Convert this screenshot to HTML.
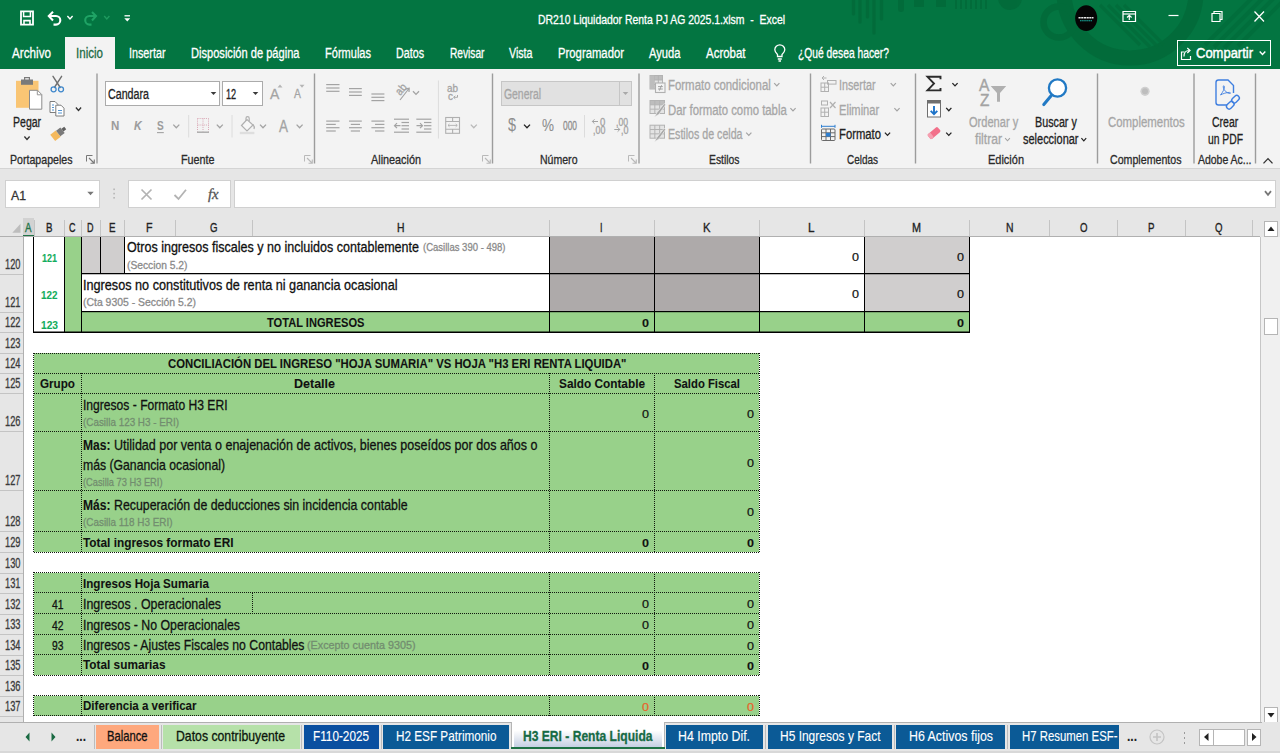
<!DOCTYPE html>
<html lang="es"><head><meta charset="utf-8"><title>DR210 Liquidador Renta PJ AG 2025.1.xlsm - Excel</title>
<style>
html,body{margin:0;padding:0;}
body{width:1280px;height:753px;overflow:hidden;position:relative;background:#fff;font-family:"Liberation Sans",sans-serif;}
#app{position:absolute;left:0;top:0;width:1280px;height:753px;overflow:hidden;}
#app div{position:absolute;box-sizing:border-box;}
#app svg{position:absolute;overflow:visible;}
.t{position:absolute;white-space:nowrap;transform-origin:0 50%;display:block;}
</style></head><body><div id="app">
<div style="left:0px;top:0px;width:1280px;height:69px;background:#037541;"></div>
<svg style="left:820px;top:0;overflow:hidden" width="460" height="69" viewBox="820 0 460 69">
<g fill="none" stroke="#026636" opacity="0.62">
<circle cx="1130" cy="-8" r="66" stroke-width="15"/>
<circle cx="1059" cy="22" r="15.5" stroke-width="6.5"/>
<path d="M1100 5 L1140 45 M1108 5 L1150 47 M1116 5 L1158 47 M1124 5 L1164 45" stroke-width="3.2" opacity="0.8"/>
<path d="M1205 45 L1255 -5 M1214 47 L1266 -5 M1224 48 L1277 -5 M1238 46 L1290 -6" stroke-width="4" opacity="0.7"/>
</g>
<g stroke="#026636" opacity="0.6" stroke-linecap="round">
<path d="M853.5 0V14 M860 0V22 M867.5 0V17 M874 0V33 M881.5 0V19" stroke-width="3.2"/>
<path d="M901 0V9" stroke-width="6"/><path d="M919 0V7 M941 0V7" stroke-width="10" stroke-linecap="butt"/>
<path d="M956 0V9 M961 0V9 M966 0V9 M971 0V9 M976 0V9 M981 0V9 M986 0V9" stroke-width="2" stroke-linecap="butt"/>
<circle cx="1010" cy="-2" r="12" fill="#026636" stroke="none"/>
</g></svg>
<div style="left:65px;top:37px;width:50px;height:32px;background:#f3f3f3;"></div>
<span class="t" style="left:12.00px;top:45.50px;font-size:14px;line-height:14px;color:#fff;transform:scaleX(0.8354);-webkit-text-stroke:0.3px #fff;">Archivo</span>
<span class="t" style="left:76.00px;top:45.50px;font-size:14px;line-height:14px;color:#1e6b45;transform:scaleX(0.8261);-webkit-text-stroke:0.3px #1e6b45;">Inicio</span>
<span class="t" style="left:128.50px;top:45.50px;font-size:14px;line-height:14px;color:#fff;transform:scaleX(0.7690);-webkit-text-stroke:0.3px #fff;">Insertar</span>
<span class="t" style="left:190.50px;top:45.50px;font-size:14px;line-height:14px;color:#fff;transform:scaleX(0.7921);-webkit-text-stroke:0.3px #fff;">Disposición de página</span>
<span class="t" style="left:324.50px;top:45.50px;font-size:14px;line-height:14px;color:#fff;transform:scaleX(0.7884);-webkit-text-stroke:0.3px #fff;">Fórmulas</span>
<span class="t" style="left:396.00px;top:45.50px;font-size:14px;line-height:14px;color:#fff;transform:scaleX(0.7656);-webkit-text-stroke:0.3px #fff;">Datos</span>
<span class="t" style="left:449.50px;top:45.50px;font-size:14px;line-height:14px;color:#fff;transform:scaleX(0.7270);-webkit-text-stroke:0.3px #fff;">Revisar</span>
<span class="t" style="left:509.00px;top:45.50px;font-size:14px;line-height:14px;color:#fff;transform:scaleX(0.7612);-webkit-text-stroke:0.3px #fff;">Vista</span>
<span class="t" style="left:558.00px;top:45.50px;font-size:14px;line-height:14px;color:#fff;transform:scaleX(0.8078);-webkit-text-stroke:0.3px #fff;">Programador</span>
<span class="t" style="left:649.00px;top:45.50px;font-size:14px;line-height:14px;color:#fff;transform:scaleX(0.7986);-webkit-text-stroke:0.3px #fff;">Ayuda</span>
<span class="t" style="left:706.00px;top:45.50px;font-size:14px;line-height:14px;color:#fff;transform:scaleX(0.8187);-webkit-text-stroke:0.3px #fff;">Acrobat</span>
<span class="t" style="left:798.00px;top:45.50px;font-size:14px;line-height:14px;color:#fff;transform:scaleX(0.7354);-webkit-text-stroke:0.3px #fff;">¿Qué desea hacer?</span>
<span class="t" style="left:537.50px;top:12.70px;font-size:13px;line-height:13px;color:#fff;transform:scaleX(0.8024);-webkit-text-stroke:0.3px #fff;white-space:pre;">DR210 Liquidador Renta PJ AG 2025.1.xlsm  -  Excel</span>
<div style="left:1177px;top:40px;width:93.5px;height:26px;border:1.5px solid #fff;"></div>
<span class="t" style="left:1196.00px;top:45.25px;font-size:15.5px;line-height:15.5px;color:#fff;transform:scaleX(0.8377);-webkit-text-stroke:0.5px #fff;">Compartir</span>
<div style="left:0px;top:69px;width:1280px;height:99px;background:#f3f3f3;"></div>
<div style="left:0px;top:168px;width:1280px;height:1px;background:#d4d4d4;"></div>
<div style="left:0px;top:169px;width:1280px;height:49px;background:#e6e6e6;"></div>
<svg style="left:0;top:0" width="1280" height="170" viewBox="0 0 1280 170"><path d="M97 73.6V163.6M314.5 73.6V163.6M492.5 73.6V163.6M639 73.6V163.6M810.5 73.6V163.6M915.5 73.6V163.6M1097.5 73.6V163.6M1194 73.6V163.6M1255.5 73.6V163.6" stroke="#9c9c9c" stroke-width="1.4" fill="none"/></svg>
<span class="t" style="left:9.50px;top:153.00px;font-size:13px;line-height:13px;color:#2b2b2b;transform:scaleX(0.8158);-webkit-text-stroke:0.3px #2b2b2b;">Portapapeles</span>
<span class="t" style="left:181.00px;top:153.00px;font-size:13px;line-height:13px;color:#2b2b2b;transform:scaleX(0.8277);-webkit-text-stroke:0.3px #2b2b2b;">Fuente</span>
<span class="t" style="left:370.50px;top:153.00px;font-size:13px;line-height:13px;color:#2b2b2b;transform:scaleX(0.8335);-webkit-text-stroke:0.3px #2b2b2b;">Alineación</span>
<span class="t" style="left:539.50px;top:153.00px;font-size:13px;line-height:13px;color:#2b2b2b;transform:scaleX(0.8110);-webkit-text-stroke:0.3px #2b2b2b;">Número</span>
<span class="t" style="left:709.00px;top:153.00px;font-size:13px;line-height:13px;color:#2b2b2b;transform:scaleX(0.7966);-webkit-text-stroke:0.3px #2b2b2b;">Estilos</span>
<span class="t" style="left:847.00px;top:153.00px;font-size:13px;line-height:13px;color:#2b2b2b;transform:scaleX(0.7660);-webkit-text-stroke:0.3px #2b2b2b;">Celdas</span>
<span class="t" style="left:988.00px;top:153.00px;font-size:13px;line-height:13px;color:#2b2b2b;transform:scaleX(0.8443);-webkit-text-stroke:0.3px #2b2b2b;">Edición</span>
<span class="t" style="left:1109.50px;top:153.00px;font-size:13px;line-height:13px;color:#2b2b2b;transform:scaleX(0.8178);-webkit-text-stroke:0.3px #2b2b2b;">Complementos</span>
<span class="t" style="left:1197.50px;top:153.00px;font-size:13px;line-height:13px;color:#2b2b2b;transform:scaleX(0.8046);-webkit-text-stroke:0.3px #2b2b2b;">Adobe Ac...</span>
<div style="left:105px;top:81px;width:115px;height:25px;background:#fff;border:1px solid #ababab;"></div>
<div style="left:222px;top:81px;width:41px;height:25px;background:#fff;border:1px solid #ababab;"></div>
<div style="left:501px;top:81px;width:131px;height:25px;background:#e1e1e1;border:1px solid #c6c6c6;"></div>
<div style="left:619px;top:81px;width:1px;height:25px;background:#c6c6c6;"></div>
<div style="left:5px;top:180px;width:95px;height:28px;background:#fff;border:1px solid #d0d0d0;"></div>
<div style="left:128px;top:180px;width:103px;height:28px;background:#fff;border:1px solid #d0d0d0;"></div>
<div style="left:234px;top:180px;width:1042px;height:28px;background:#fff;border:1px solid #d0d0d0;"></div>
<span class="t" style="left:11.00px;top:188.50px;font-size:13px;line-height:13px;color:#333;transform:scaleX(0.9433);-webkit-text-stroke:0.3px #333;">A1</span>
<div style="left:0px;top:218px;width:1260px;height:505px;background:#fff;"></div>
<div style="left:0px;top:218px;width:1260px;height:18.5px;background:#e6e6e6;"></div>
<div style="left:0px;top:237px;width:23px;height:486px;background:#e6e6e6;"></div>
<div style="left:1260px;top:218px;width:20px;height:19px;background:#e6e6e6;"></div>
<div style="left:1260px;top:237px;width:20px;height:486px;background:#f0f0f0;"></div>
<div style="left:1260px;top:237px;width:1px;height:486px;background:#c6c6c6;"></div>
<div style="left:23px;top:218px;width:11px;height:19px;background:#d2d2d2;border-bottom:2px solid #217346;"></div>
<span class="t" style="left:25.25px;top:220.75px;font-size:13.5px;line-height:13.5px;color:#217346;transform:scaleX(0.7218);-webkit-text-stroke:0.35px #217346;">A</span>
<div style="left:33.5px;top:220px;width:1px;height:16px;background:#c4c4c4;"></div>
<span class="t" style="left:45.75px;top:220.75px;font-size:13.5px;line-height:13.5px;color:#222;transform:scaleX(0.7218);-webkit-text-stroke:0.35px #222;">B</span>
<div style="left:63.5px;top:220px;width:1px;height:16px;background:#c4c4c4;"></div>
<span class="t" style="left:69.25px;top:220.75px;font-size:13.5px;line-height:13.5px;color:#222;transform:scaleX(0.6667);-webkit-text-stroke:0.35px #222;">C</span>
<div style="left:80.5px;top:220px;width:1px;height:16px;background:#c4c4c4;"></div>
<span class="t" style="left:87.25px;top:220.75px;font-size:13.5px;line-height:13.5px;color:#222;transform:scaleX(0.6667);-webkit-text-stroke:0.35px #222;">D</span>
<div style="left:99.5px;top:220px;width:1px;height:16px;background:#c4c4c4;"></div>
<span class="t" style="left:108.75px;top:220.75px;font-size:13.5px;line-height:13.5px;color:#222;transform:scaleX(0.7218);-webkit-text-stroke:0.35px #222;">E</span>
<div style="left:123.5px;top:220px;width:1px;height:16px;background:#c4c4c4;"></div>
<span class="t" style="left:146.25px;top:220.75px;font-size:13.5px;line-height:13.5px;color:#222;transform:scaleX(0.7882);-webkit-text-stroke:0.35px #222;">F</span>
<div style="left:174.5px;top:220px;width:1px;height:16px;background:#c4c4c4;"></div>
<span class="t" style="left:209.75px;top:220.75px;font-size:13.5px;line-height:13.5px;color:#222;transform:scaleX(0.7143);-webkit-text-stroke:0.35px #222;">G</span>
<div style="left:251.5px;top:220px;width:1px;height:16px;background:#c4c4c4;"></div>
<span class="t" style="left:396.75px;top:220.75px;font-size:13.5px;line-height:13.5px;color:#222;transform:scaleX(0.7693);-webkit-text-stroke:0.35px #222;">H</span>
<div style="left:548.5px;top:220px;width:1px;height:16px;background:#c4c4c4;"></div>
<span class="t" style="left:600.25px;top:220.75px;font-size:13.5px;line-height:13.5px;color:#222;transform:scaleX(0.6666);-webkit-text-stroke:0.35px #222;">I</span>
<div style="left:653.5px;top:220px;width:1px;height:16px;background:#c4c4c4;"></div>
<span class="t" style="left:702.75px;top:220.75px;font-size:13.5px;line-height:13.5px;color:#222;transform:scaleX(0.8329);-webkit-text-stroke:0.35px #222;">K</span>
<div style="left:758.5px;top:220px;width:1px;height:16px;background:#c4c4c4;"></div>
<span class="t" style="left:808.25px;top:220.75px;font-size:13.5px;line-height:13.5px;color:#222;transform:scaleX(0.8657);-webkit-text-stroke:0.35px #222;">L</span>
<div style="left:863.5px;top:220px;width:1px;height:16px;background:#c4c4c4;"></div>
<span class="t" style="left:912.00px;top:220.75px;font-size:13.5px;line-height:13.5px;color:#222;transform:scaleX(0.8003);-webkit-text-stroke:0.35px #222;">M</span>
<div style="left:968.5px;top:220px;width:1px;height:16px;background:#c4c4c4;"></div>
<span class="t" style="left:1005.50px;top:220.75px;font-size:13.5px;line-height:13.5px;color:#222;transform:scaleX(0.7693);-webkit-text-stroke:0.35px #222;">N</span>
<div style="left:1049.0px;top:220px;width:1px;height:16px;background:#c4c4c4;"></div>
<span class="t" style="left:1079.75px;top:220.75px;font-size:13.5px;line-height:13.5px;color:#222;transform:scaleX(0.7143);-webkit-text-stroke:0.35px #222;">O</span>
<div style="left:1117.0px;top:220px;width:1px;height:16px;background:#c4c4c4;"></div>
<span class="t" style="left:1148.00px;top:220.75px;font-size:13.5px;line-height:13.5px;color:#222;transform:scaleX(0.7218);-webkit-text-stroke:0.35px #222;">P</span>
<div style="left:1184.5px;top:220px;width:1px;height:16px;background:#c4c4c4;"></div>
<span class="t" style="left:1215.00px;top:220.75px;font-size:13.5px;line-height:13.5px;color:#222;transform:scaleX(0.7143);-webkit-text-stroke:0.35px #222;">Q</span>
<div style="left:1252.0px;top:220px;width:1px;height:16px;background:#c4c4c4;"></div>
<div style="left:0px;top:236px;width:1260px;height:1px;background:#b0b0b0;"></div>
<span class="t" style="left:4.50px;top:257.25px;font-size:14.5px;line-height:14.5px;color:#3a3a3a;transform:scaleX(0.6407);-webkit-text-stroke:0.3px #3a3a3a;">120</span>
<div style="left:0px;top:273.5px;width:23px;height:1px;background:#c4c4c4;"></div>
<span class="t" style="left:4.50px;top:295.25px;font-size:14.5px;line-height:14.5px;color:#3a3a3a;transform:scaleX(0.6407);-webkit-text-stroke:0.3px #3a3a3a;">121</span>
<div style="left:0px;top:311.5px;width:23px;height:1px;background:#c4c4c4;"></div>
<span class="t" style="left:4.50px;top:315.25px;font-size:14.5px;line-height:14.5px;color:#3a3a3a;transform:scaleX(0.6407);-webkit-text-stroke:0.3px #3a3a3a;">122</span>
<div style="left:0px;top:331.5px;width:23px;height:1px;background:#c4c4c4;"></div>
<span class="t" style="left:4.50px;top:336.25px;font-size:14.5px;line-height:14.5px;color:#3a3a3a;transform:scaleX(0.6407);-webkit-text-stroke:0.3px #3a3a3a;">123</span>
<div style="left:0px;top:352.5px;width:23px;height:1px;background:#c4c4c4;"></div>
<span class="t" style="left:4.50px;top:356.25px;font-size:14.5px;line-height:14.5px;color:#3a3a3a;transform:scaleX(0.6407);-webkit-text-stroke:0.3px #3a3a3a;">124</span>
<div style="left:0px;top:372.5px;width:23px;height:1px;background:#c4c4c4;"></div>
<span class="t" style="left:4.50px;top:376.25px;font-size:14.5px;line-height:14.5px;color:#3a3a3a;transform:scaleX(0.6407);-webkit-text-stroke:0.3px #3a3a3a;">125</span>
<div style="left:0px;top:392.5px;width:23px;height:1px;background:#c4c4c4;"></div>
<span class="t" style="left:4.50px;top:414.25px;font-size:14.5px;line-height:14.5px;color:#3a3a3a;transform:scaleX(0.6407);-webkit-text-stroke:0.3px #3a3a3a;">126</span>
<div style="left:0px;top:430.5px;width:23px;height:1px;background:#c4c4c4;"></div>
<span class="t" style="left:4.50px;top:473.25px;font-size:14.5px;line-height:14.5px;color:#3a3a3a;transform:scaleX(0.6407);-webkit-text-stroke:0.3px #3a3a3a;">127</span>
<div style="left:0px;top:489.5px;width:23px;height:1px;background:#c4c4c4;"></div>
<span class="t" style="left:4.50px;top:514.25px;font-size:14.5px;line-height:14.5px;color:#3a3a3a;transform:scaleX(0.6407);-webkit-text-stroke:0.3px #3a3a3a;">128</span>
<div style="left:0px;top:530.5px;width:23px;height:1px;background:#c4c4c4;"></div>
<span class="t" style="left:4.50px;top:535.25px;font-size:14.5px;line-height:14.5px;color:#3a3a3a;transform:scaleX(0.6407);-webkit-text-stroke:0.3px #3a3a3a;">129</span>
<div style="left:0px;top:551.5px;width:23px;height:1px;background:#c4c4c4;"></div>
<span class="t" style="left:4.50px;top:556.25px;font-size:14.5px;line-height:14.5px;color:#3a3a3a;transform:scaleX(0.6407);-webkit-text-stroke:0.3px #3a3a3a;">130</span>
<div style="left:0px;top:572.5px;width:23px;height:1px;background:#c4c4c4;"></div>
<span class="t" style="left:4.50px;top:576.25px;font-size:14.5px;line-height:14.5px;color:#3a3a3a;transform:scaleX(0.6407);-webkit-text-stroke:0.3px #3a3a3a;">131</span>
<div style="left:0px;top:592.5px;width:23px;height:1px;background:#c4c4c4;"></div>
<span class="t" style="left:4.50px;top:597.25px;font-size:14.5px;line-height:14.5px;color:#3a3a3a;transform:scaleX(0.6407);-webkit-text-stroke:0.3px #3a3a3a;">132</span>
<div style="left:0px;top:613.5px;width:23px;height:1px;background:#c4c4c4;"></div>
<span class="t" style="left:4.50px;top:617.25px;font-size:14.5px;line-height:14.5px;color:#3a3a3a;transform:scaleX(0.6407);-webkit-text-stroke:0.3px #3a3a3a;">133</span>
<div style="left:0px;top:633.5px;width:23px;height:1px;background:#c4c4c4;"></div>
<span class="t" style="left:4.50px;top:638.25px;font-size:14.5px;line-height:14.5px;color:#3a3a3a;transform:scaleX(0.6407);-webkit-text-stroke:0.3px #3a3a3a;">134</span>
<div style="left:0px;top:654.5px;width:23px;height:1px;background:#c4c4c4;"></div>
<span class="t" style="left:4.50px;top:658.25px;font-size:14.5px;line-height:14.5px;color:#3a3a3a;transform:scaleX(0.6407);-webkit-text-stroke:0.3px #3a3a3a;">135</span>
<div style="left:0px;top:674.5px;width:23px;height:1px;background:#c4c4c4;"></div>
<span class="t" style="left:4.50px;top:679.25px;font-size:14.5px;line-height:14.5px;color:#3a3a3a;transform:scaleX(0.6407);-webkit-text-stroke:0.3px #3a3a3a;">136</span>
<div style="left:0px;top:695.5px;width:23px;height:1px;background:#c4c4c4;"></div>
<span class="t" style="left:4.50px;top:699.25px;font-size:14.5px;line-height:14.5px;color:#3a3a3a;transform:scaleX(0.6407);-webkit-text-stroke:0.3px #3a3a3a;">137</span>
<div style="left:0px;top:715.5px;width:23px;height:1px;background:#c4c4c4;"></div>
<div style="left:22.5px;top:237px;width:1px;height:486px;background:#b0b0b0;"></div>
<div style="left:64px;top:237px;width:17px;height:95px;background:#98d18a;"></div>
<div style="left:81px;top:237px;width:19px;height:37px;background:#d0cece;"></div>
<div style="left:100px;top:237px;width:24px;height:37px;background:#d0cece;"></div>
<div style="left:549px;top:237px;width:210px;height:75px;background:#aeaaaa;"></div>
<div style="left:864px;top:237px;width:105px;height:75px;background:#d0cece;"></div>
<div style="left:81px;top:312px;width:888px;height:20px;background:#98d18a;"></div>
<div style="left:81px;top:273px;width:888px;height:1px;background:#000;"></div>
<div style="left:81px;top:274px;width:888px;height:1px;background:rgba(0,0,0,0.25);"></div>
<div style="left:81px;top:311px;width:888px;height:1px;background:#000;"></div>
<div style="left:81px;top:312px;width:888px;height:1px;background:rgba(0,0,0,0.2);"></div>
<div style="left:33px;top:331px;width:937px;height:1px;background:rgba(0,0,0,0.5);"></div>
<div style="left:33px;top:332px;width:937px;height:1px;background:#000;"></div>
<div style="left:33px;top:237px;width:1.3px;height:95px;background:#000;"></div>
<div style="left:64px;top:237px;width:1.3px;height:95px;background:#000;"></div>
<div style="left:81px;top:237px;width:1.3px;height:95px;background:#000;"></div>
<div style="left:549px;top:237px;width:1.3px;height:95px;background:#000;"></div>
<div style="left:654px;top:237px;width:1.3px;height:95px;background:#000;"></div>
<div style="left:759px;top:237px;width:1.3px;height:95px;background:#000;"></div>
<div style="left:864px;top:237px;width:1.3px;height:95px;background:#000;"></div>
<div style="left:968.6px;top:237px;width:1.3px;height:95px;background:#000;"></div>
<div style="left:100px;top:237px;width:1.3px;height:37px;background:#000;"></div>
<div style="left:124px;top:237px;width:1.3px;height:37px;background:#000;"></div>
<span class="t" style="left:41.50px;top:252.75px;font-size:10.5px;line-height:10.5px;color:#13ad5c;transform:scaleX(0.8562);-webkit-text-stroke:0.08px #13ad5c;font-weight:bold;">121</span>
<span class="t" style="left:40.75px;top:290.25px;font-size:10.5px;line-height:10.5px;color:#13ad5c;transform:scaleX(0.9418);-webkit-text-stroke:0.08px #13ad5c;font-weight:bold;">122</span>
<span class="t" style="left:41.00px;top:319.75px;font-size:10.5px;line-height:10.5px;color:#13ad5c;transform:scaleX(0.9704);-webkit-text-stroke:0.08px #13ad5c;font-weight:bold;">123</span>
<span class="t" style="left:127.00px;top:240.25px;font-size:14.5px;line-height:14.5px;color:#111;transform:scaleX(0.8647);-webkit-text-stroke:0.3px #111;">Otros ingresos fiscales y no incluidos contablemente</span>
<span class="t" style="left:422.50px;top:242.25px;font-size:11.5px;line-height:11.5px;color:#8a8a8a;transform:scaleX(0.8274);-webkit-text-stroke:0.3px #8a8a8a;">(Casillas 390 - 498)</span>
<span class="t" style="left:127.00px;top:259.75px;font-size:11.5px;line-height:11.5px;color:#8a8a8a;transform:scaleX(0.8929);-webkit-text-stroke:0.3px #8a8a8a;">(Seccion 5.2)</span>
<span class="t" style="left:83.00px;top:278.25px;font-size:14.5px;line-height:14.5px;color:#111;transform:scaleX(0.8728);-webkit-text-stroke:0.3px #111;">Ingresos no constitutivos de renta ni ganancia ocasional</span>
<span class="t" style="left:83.00px;top:297.25px;font-size:11.5px;line-height:11.5px;color:#8a8a8a;transform:scaleX(0.9065);-webkit-text-stroke:0.3px #8a8a8a;">(Cta 9305 - Sección 5.2)</span>
<span class="t" style="left:266.50px;top:315.75px;font-size:13.5px;line-height:13.5px;color:#111;transform:scaleX(0.8227);-webkit-text-stroke:0.08px #111;font-weight:bold;">TOTAL INGRESOS</span>
<span class="t" style="left:851.50px;top:251.75px;font-size:10.5px;line-height:10.5px;color:#111;transform:scaleX(1.1987);-webkit-text-stroke:0.2px #111;">0</span>
<span class="t" style="left:956.50px;top:251.75px;font-size:10.5px;line-height:10.5px;color:#111;transform:scaleX(1.1987);-webkit-text-stroke:0.2px #111;">0</span>
<span class="t" style="left:851.50px;top:289.25px;font-size:10.5px;line-height:10.5px;color:#111;transform:scaleX(1.1987);-webkit-text-stroke:0.2px #111;">0</span>
<span class="t" style="left:956.50px;top:289.25px;font-size:10.5px;line-height:10.5px;color:#111;transform:scaleX(1.1987);-webkit-text-stroke:0.2px #111;">0</span>
<span class="t" style="left:641.50px;top:318.25px;font-size:10.5px;line-height:10.5px;color:#111;transform:scaleX(1.1987);-webkit-text-stroke:0.1px #111;font-weight:bold;">0</span>
<span class="t" style="left:956.50px;top:318.25px;font-size:10.5px;line-height:10.5px;color:#111;transform:scaleX(1.1987);-webkit-text-stroke:0.1px #111;font-weight:bold;">0</span>
<div style="left:34px;top:353px;width:725px;height:199px;background:#98d18a;"></div>
<div style="left:34px;top:572.5px;width:725px;height:102.5px;background:#98d18a;"></div>
<div style="left:34px;top:695.5px;width:725px;height:20.0px;background:#98d18a;"></div>
<div style="left:34px;top:352.5px;width:725px;height:0px;border-top:1px dotted #10180e;height:0;"></div>
<div style="left:34px;top:372.5px;width:725px;height:0px;border-top:1px dotted #10180e;height:0;"></div>
<div style="left:34px;top:392.5px;width:725px;height:0px;border-top:1px dotted #10180e;height:0;"></div>
<div style="left:34px;top:430.5px;width:725px;height:0px;border-top:1px dotted #10180e;height:0;"></div>
<div style="left:34px;top:489.5px;width:725px;height:0px;border-top:1px dotted #10180e;height:0;"></div>
<div style="left:34px;top:530.5px;width:725px;height:0px;border-top:1px dotted #10180e;height:0;"></div>
<div style="left:34px;top:551.5px;width:725px;height:0px;border-top:1px dotted #10180e;height:0;"></div>
<div style="left:34px;top:571.9px;width:725px;height:0px;border-top:1px dotted #10180e;height:0;"></div>
<div style="left:34px;top:591.9px;width:725px;height:0px;border-top:1px dotted #10180e;height:0;"></div>
<div style="left:34px;top:612.9px;width:725px;height:0px;border-top:1px dotted #10180e;height:0;"></div>
<div style="left:34px;top:633.5px;width:725px;height:0px;border-top:1px dotted #10180e;height:0;"></div>
<div style="left:34px;top:653.9px;width:725px;height:0px;border-top:1px dotted #10180e;height:0;"></div>
<div style="left:34px;top:674.5px;width:725px;height:0px;border-top:1px dotted #10180e;height:0;"></div>
<div style="left:34px;top:694.9px;width:725px;height:0px;border-top:1px dotted #10180e;height:0;"></div>
<div style="left:34px;top:714.9px;width:725px;height:0px;border-top:1px dotted #10180e;height:0;"></div>
<div style="left:33.0px;top:353px;width:0px;height:199px;border-left:1px dotted #10180e;width:0;"></div>
<div style="left:759.0px;top:353px;width:0px;height:199px;border-left:1px dotted #10180e;width:0;"></div>
<div style="left:80.5px;top:373px;width:0px;height:179px;border-left:1px dotted #10180e;width:0;"></div>
<div style="left:548.5px;top:373px;width:0px;height:179px;border-left:1px dotted #10180e;width:0;"></div>
<div style="left:653.5px;top:373px;width:0px;height:179px;border-left:1px dotted #10180e;width:0;"></div>
<div style="left:33.0px;top:572px;width:0px;height:103px;border-left:1px dotted #10180e;width:0;"></div>
<div style="left:759.0px;top:572px;width:0px;height:103px;border-left:1px dotted #10180e;width:0;"></div>
<div style="left:80.5px;top:572px;width:0px;height:103px;border-left:1px dotted #10180e;width:0;"></div>
<div style="left:548.5px;top:572px;width:0px;height:103px;border-left:1px dotted #10180e;width:0;"></div>
<div style="left:653.5px;top:572px;width:0px;height:103px;border-left:1px dotted #10180e;width:0;"></div>
<div style="left:33.0px;top:695px;width:0px;height:20.5px;border-left:1px dotted #10180e;width:0;"></div>
<div style="left:759.0px;top:695px;width:0px;height:20.5px;border-left:1px dotted #10180e;width:0;"></div>
<div style="left:80.5px;top:695px;width:0px;height:20.5px;border-left:1px dotted #10180e;width:0;"></div>
<div style="left:548.5px;top:695px;width:0px;height:20.5px;border-left:1px dotted #10180e;width:0;"></div>
<div style="left:653.5px;top:695px;width:0px;height:20.5px;border-left:1px dotted #10180e;width:0;"></div>
<div style="left:251.5px;top:593px;width:0px;height:21px;border-left:1px dotted #10180e;width:0;"></div>
<span class="t" style="left:167.50px;top:356.75px;font-size:13.5px;line-height:13.5px;color:#111;transform:scaleX(0.8391);-webkit-text-stroke:0.08px #111;font-weight:bold;">CONCILIACIÓN DEL INGRESO &quot;HOJA SUMARIA&quot; VS HOJA &quot;H3 ERI RENTA LIQUIDA&quot;</span>
<span class="t" style="left:40.00px;top:377.25px;font-size:13.5px;line-height:13.5px;color:#111;transform:scaleX(0.8643);-webkit-text-stroke:0.08px #111;font-weight:bold;">Grupo</span>
<span class="t" style="left:294.00px;top:377.25px;font-size:13.5px;line-height:13.5px;color:#111;transform:scaleX(0.9261);-webkit-text-stroke:0.08px #111;font-weight:bold;">Detalle</span>
<span class="t" style="left:559.00px;top:377.25px;font-size:13.5px;line-height:13.5px;color:#111;transform:scaleX(0.8752);-webkit-text-stroke:0.08px #111;font-weight:bold;">Saldo Contable</span>
<span class="t" style="left:674.00px;top:377.25px;font-size:13.5px;line-height:13.5px;color:#111;transform:scaleX(0.8378);-webkit-text-stroke:0.08px #111;font-weight:bold;">Saldo Fiscal</span>
<span class="t" style="left:83.00px;top:397.75px;font-size:14.5px;line-height:14.5px;color:#111;transform:scaleX(0.8340);-webkit-text-stroke:0.3px #111;">Ingresos - Formato H3 ERI</span>
<span class="t" style="left:83.00px;top:417.25px;font-size:11.5px;line-height:11.5px;color:#728d6f;transform:scaleX(0.8584);-webkit-text-stroke:0.3px #728d6f;">(Casilla 123 H3 - ERI)</span>
<span class="t" style="left:641.50px;top:409.25px;font-size:10.5px;line-height:10.5px;color:#111;transform:scaleX(1.1987);-webkit-text-stroke:0.2px #111;">0</span>
<span class="t" style="left:746.50px;top:409.25px;font-size:10.5px;line-height:10.5px;color:#111;transform:scaleX(1.1987);-webkit-text-stroke:0.2px #111;">0</span>
<span class="t" style="left:83.00px;top:438.00px;font-size:14px;line-height:14px;color:#111;transform:scaleX(0.8621);-webkit-text-stroke:0.08px #111;font-weight:bold;">Mas:</span>
<span class="t" style="left:114.00px;top:437.75px;font-size:14.5px;line-height:14.5px;color:#111;transform:scaleX(0.8641);-webkit-text-stroke:0.3px #111;">Utilidad por venta o enajenación de activos, bienes poseídos por dos años o</span>
<span class="t" style="left:83.00px;top:457.75px;font-size:14.5px;line-height:14.5px;color:#111;transform:scaleX(0.8430);-webkit-text-stroke:0.3px #111;">más (Ganancia ocasional)</span>
<span class="t" style="left:83.00px;top:477.25px;font-size:11.5px;line-height:11.5px;color:#728d6f;transform:scaleX(0.8078);-webkit-text-stroke:0.3px #728d6f;">(Casilla 73 H3 ERI)</span>
<span class="t" style="left:746.50px;top:457.75px;font-size:10.5px;line-height:10.5px;color:#111;transform:scaleX(1.1987);-webkit-text-stroke:0.2px #111;">0</span>
<span class="t" style="left:83.00px;top:498.00px;font-size:14px;line-height:14px;color:#111;transform:scaleX(0.8621);-webkit-text-stroke:0.08px #111;font-weight:bold;">Más:</span>
<span class="t" style="left:114.00px;top:497.75px;font-size:14.5px;line-height:14.5px;color:#111;transform:scaleX(0.8507);-webkit-text-stroke:0.3px #111;">Recuperación de deducciones sin incidencia contable</span>
<span class="t" style="left:83.00px;top:517.25px;font-size:11.5px;line-height:11.5px;color:#728d6f;transform:scaleX(0.8609);-webkit-text-stroke:0.3px #728d6f;">(Casilla 118 H3 ERI)</span>
<span class="t" style="left:746.50px;top:507.25px;font-size:10.5px;line-height:10.5px;color:#111;transform:scaleX(1.1987);-webkit-text-stroke:0.2px #111;">0</span>
<span class="t" style="left:83.00px;top:536.25px;font-size:13.5px;line-height:13.5px;color:#111;transform:scaleX(0.8774);-webkit-text-stroke:0.08px #111;font-weight:bold;">Total ingresos formato ERI</span>
<span class="t" style="left:641.50px;top:538.25px;font-size:10.5px;line-height:10.5px;color:#111;transform:scaleX(1.1987);-webkit-text-stroke:0.1px #111;font-weight:bold;">0</span>
<span class="t" style="left:746.50px;top:538.25px;font-size:10.5px;line-height:10.5px;color:#111;transform:scaleX(1.1987);-webkit-text-stroke:0.1px #111;font-weight:bold;">0</span>
<span class="t" style="left:83.00px;top:576.75px;font-size:13.5px;line-height:13.5px;color:#111;transform:scaleX(0.8612);-webkit-text-stroke:0.08px #111;font-weight:bold;">Ingresos Hoja Sumaria</span>
<span class="t" style="left:51.50px;top:597.50px;font-size:13px;line-height:13px;color:#111;transform:scaleX(0.7953);-webkit-text-stroke:0.3px #111;">41</span>
<span class="t" style="left:83.00px;top:596.75px;font-size:14.5px;line-height:14.5px;color:#111;transform:scaleX(0.8561);-webkit-text-stroke:0.3px #111;">Ingresos . Operacionales</span>
<span class="t" style="left:641.50px;top:599.25px;font-size:10.5px;line-height:10.5px;color:#111;transform:scaleX(1.1987);-webkit-text-stroke:0.2px #111;">0</span>
<span class="t" style="left:746.50px;top:599.25px;font-size:10.5px;line-height:10.5px;color:#111;transform:scaleX(1.1987);-webkit-text-stroke:0.2px #111;">0</span>
<span class="t" style="left:51.50px;top:618.50px;font-size:13px;line-height:13px;color:#111;transform:scaleX(0.7953);-webkit-text-stroke:0.3px #111;">42</span>
<span class="t" style="left:83.00px;top:617.75px;font-size:14.5px;line-height:14.5px;color:#111;transform:scaleX(0.8506);-webkit-text-stroke:0.3px #111;">Ingresos - No Operacionales</span>
<span class="t" style="left:641.50px;top:620.25px;font-size:10.5px;line-height:10.5px;color:#111;transform:scaleX(1.1987);-webkit-text-stroke:0.2px #111;">0</span>
<span class="t" style="left:746.50px;top:620.25px;font-size:10.5px;line-height:10.5px;color:#111;transform:scaleX(1.1987);-webkit-text-stroke:0.2px #111;">0</span>
<span class="t" style="left:51.50px;top:639.00px;font-size:13px;line-height:13px;color:#111;transform:scaleX(0.7953);-webkit-text-stroke:0.3px #111;">93</span>
<span class="t" style="left:83.00px;top:637.75px;font-size:14.5px;line-height:14.5px;color:#111;transform:scaleX(0.8456);-webkit-text-stroke:0.3px #111;">Ingresos - Ajustes Fiscales no Contables</span>
<span class="t" style="left:307.00px;top:639.75px;font-size:11.5px;line-height:11.5px;color:#728d6f;transform:scaleX(0.9376);-webkit-text-stroke:0.3px #728d6f;">(Excepto cuenta 9305)</span>
<span class="t" style="left:746.50px;top:640.75px;font-size:10.5px;line-height:10.5px;color:#111;transform:scaleX(1.1987);-webkit-text-stroke:0.2px #111;">0</span>
<span class="t" style="left:83.00px;top:658.25px;font-size:13.5px;line-height:13.5px;color:#111;transform:scaleX(0.8750);-webkit-text-stroke:0.08px #111;font-weight:bold;">Total sumarias</span>
<span class="t" style="left:641.50px;top:660.75px;font-size:10.5px;line-height:10.5px;color:#111;transform:scaleX(1.1987);-webkit-text-stroke:0.1px #111;font-weight:bold;">0</span>
<span class="t" style="left:746.50px;top:660.75px;font-size:10.5px;line-height:10.5px;color:#111;transform:scaleX(1.1987);-webkit-text-stroke:0.1px #111;font-weight:bold;">0</span>
<span class="t" style="left:83.00px;top:699.25px;font-size:13.5px;line-height:13.5px;color:#111;transform:scaleX(0.8545);-webkit-text-stroke:0.08px #111;font-weight:bold;">Diferencia a verificar</span>
<span class="t" style="left:641.50px;top:701.75px;font-size:10.5px;line-height:10.5px;color:#e8622c;transform:scaleX(1.1987);-webkit-text-stroke:0.2px #e8622c;">0</span>
<span class="t" style="left:746.50px;top:701.75px;font-size:10.5px;line-height:10.5px;color:#e8622c;transform:scaleX(1.1987);-webkit-text-stroke:0.2px #e8622c;">0</span>
<div style="left:1264px;top:221px;width:14px;height:15.5px;background:#fff;border:1px solid #b5b5b5;"></div>
<div style="left:1264px;top:318px;width:14px;height:17px;background:#fff;border:1px solid #b5b5b5;"></div>
<div style="left:1264px;top:707px;width:14px;height:16px;background:#fff;border:1px solid #b5b5b5;"></div>
<svg style="left:1264px;top:221px" width="14" height="16"><path d="M3.5 10 L7 5.5 L10.5 10Z" fill="#222"/></svg>
<svg style="left:1264px;top:707px" width="14" height="16"><path d="M3.5 6 L7 10.5 L10.5 6Z" fill="#222"/></svg>
<div style="left:0px;top:722px;width:1280px;height:31px;background:#e6e6e6;"></div>
<div style="left:0px;top:722px;width:1262px;height:1px;background:#b0b0b0;"></div>
<div style="left:0px;top:751px;width:1280px;height:2px;background:#d8d8d8;"></div>
<div style="left:96px;top:725px;width:63px;height:24px;background:#fea87d;"></div>
<span class="t" style="left:106.50px;top:729.25px;font-size:14.5px;line-height:14.5px;color:#111;transform:scaleX(0.7729);-webkit-text-stroke:0.3px #111;">Balance</span>
<div style="left:163px;top:725px;width:136.5px;height:24px;background:#b6e1a9;"></div>
<span class="t" style="left:175.50px;top:729.25px;font-size:14.5px;line-height:14.5px;color:#0c160c;transform:scaleX(0.8452);-webkit-text-stroke:0.3px #0c160c;">Datos contribuyente</span>
<div style="left:304px;top:725px;width:75px;height:24px;background:#0a4fa0;"></div>
<span class="t" style="left:312.50px;top:729.25px;font-size:14.5px;line-height:14.5px;color:#fff;transform:scaleX(0.8109);-webkit-text-stroke:0.12px #fff;">F110-2025</span>
<div style="left:383px;top:725px;width:126px;height:24px;background:#0b5a96;"></div>
<span class="t" style="left:395.50px;top:729.25px;font-size:14.5px;line-height:14.5px;color:#fff;transform:scaleX(0.8098);-webkit-text-stroke:0.12px #fff;">H2 ESF Patrimonio</span>
<div style="left:666px;top:725px;width:97px;height:24px;background:#0b5a96;"></div>
<span class="t" style="left:678.00px;top:729.25px;font-size:14.5px;line-height:14.5px;color:#fff;transform:scaleX(0.8510);-webkit-text-stroke:0.12px #fff;">H4 Impto Dif.</span>
<div style="left:768px;top:725px;width:124px;height:24px;background:#0b5a96;"></div>
<span class="t" style="left:779.50px;top:729.25px;font-size:14.5px;line-height:14.5px;color:#fff;transform:scaleX(0.8259);-webkit-text-stroke:0.12px #fff;">H5 Ingresos y Fact</span>
<div style="left:896px;top:725px;width:109px;height:24px;background:#0b5a96;"></div>
<span class="t" style="left:908.50px;top:729.25px;font-size:14.5px;line-height:14.5px;color:#fff;transform:scaleX(0.8544);-webkit-text-stroke:0.12px #fff;">H6 Activos fijos</span>
<div style="left:1010px;top:725px;width:109px;height:24px;background:#0b5a96;"></div>
<span class="t" style="left:1021.50px;top:729.25px;font-size:14.5px;line-height:14.5px;color:#fff;transform:scaleX(0.7848);-webkit-text-stroke:0.12px #fff;">H7 Resumen ESF-</span>
<div style="left:94.0px;top:725px;width:1px;height:24px;background:#bcbcbc;"></div>
<div style="left:160.5px;top:725px;width:1px;height:24px;background:#bcbcbc;"></div>
<div style="left:301.0px;top:725px;width:1px;height:24px;background:#bcbcbc;"></div>
<div style="left:380.5px;top:725px;width:1px;height:24px;background:#bcbcbc;"></div>
<div style="left:510.5px;top:725px;width:1px;height:24px;background:#bcbcbc;"></div>
<div style="left:765.0px;top:725px;width:1px;height:24px;background:#bcbcbc;"></div>
<div style="left:893.5px;top:725px;width:1px;height:24px;background:#bcbcbc;"></div>
<div style="left:1007.0px;top:725px;width:1px;height:24px;background:#bcbcbc;"></div>
<div style="left:511px;top:722px;width:153.5px;height:27px;background:#fff;border-left:1px solid #b5b5b5;border-right:1px solid #b5b5b5;"></div>
<div style="left:514px;top:725px;width:147.5px;height:21.5px;background:linear-gradient(#fff 25%,#c5cfe2);"></div>
<div style="left:511px;top:746.5px;width:153.5px;height:2px;background:#1e7145;"></div>
<span class="t" style="left:522.50px;top:729.25px;font-size:14.5px;line-height:14.5px;color:#176b45;transform:scaleX(0.8329);-webkit-text-stroke:0.3px #176b45;font-weight:bold;">H3 ERI - Renta Liquida</span>
<span class="t" style="left:76.00px;top:728.60px;font-size:14px;line-height:14px;color:#222;transform:scaleX(0.8570);-webkit-text-stroke:0.08px #222;font-weight:bold;">...</span>
<span class="t" style="left:1126.70px;top:728.60px;font-size:14px;line-height:14px;color:#222;transform:scaleX(0.8656);-webkit-text-stroke:0.08px #222;font-weight:bold;">...</span>
<svg style="left:20px;top:728px" width="50" height="18"><path d="M9.5 4.5 L5.5 9 L9.5 13.5Z M31.5 4.5 L35.5 9 L31.5 13.5Z" fill="#1a6a42"/></svg>
<svg style="left:1148px;top:728px" width="18" height="18"><circle cx="9" cy="9" r="7" fill="none" stroke="#c4c4c4" stroke-width="1.2"/><path d="M5 9H13M9 5V13" stroke="#c4c4c4" stroke-width="1.6"/></svg>
<div style="left:1183.5px;top:732px;width:1.5px;height:1.5px;background:#9a9a9a;"></div>
<div style="left:1183.5px;top:737px;width:1.5px;height:1.5px;background:#9a9a9a;"></div>
<div style="left:1183.5px;top:742px;width:1.5px;height:1.5px;background:#9a9a9a;"></div>
<div style="left:1199px;top:729px;width:15px;height:16.5px;background:#fff;border:1px solid #b5b5b5;"></div>
<div style="left:1213px;top:729px;width:32px;height:16.5px;background:#fff;border:1px solid #b5b5b5;"></div>
<div style="left:1247px;top:729px;width:14px;height:16.5px;background:#fff;border:1px solid #b5b5b5;"></div>
<svg style="left:1199px;top:729px" width="62" height="16"><path d="M9.5 4 L5 8 L9.5 12Z M53 4 L57.5 8 L53 12Z" fill="#222"/></svg>
<span class="t" style="left:13.30px;top:114.80px;font-size:14px;line-height:14px;color:#222;transform:scaleX(0.7521);-webkit-text-stroke:0.3px #222;">Pegar</span>
<span class="t" style="left:108.20px;top:86.50px;font-size:14px;line-height:14px;color:#222;transform:scaleX(0.7616);-webkit-text-stroke:0.3px #222;">Candara</span>
<span class="t" style="left:225.90px;top:86.50px;font-size:14px;line-height:14px;color:#222;transform:scaleX(0.6550);-webkit-text-stroke:0.3px #222;">12</span>
<span class="t" style="left:504.00px;top:86.50px;font-size:14px;line-height:14px;color:#a6a6a6;transform:scaleX(0.7428);-webkit-text-stroke:0.3px #a6a6a6;">General</span>
<span class="t" style="left:270.40px;top:85.65px;font-size:15.5px;line-height:15.5px;color:#a3a3a3;transform:scaleX(0.8995);-webkit-text-stroke:0.3px #a3a3a3;">A</span>
<span class="t" style="left:293.60px;top:88.35px;font-size:12.5px;line-height:12.5px;color:#a3a3a3;transform:scaleX(0.8275);-webkit-text-stroke:0.3px #a3a3a3;">A</span>
<span class="t" style="left:111.30px;top:118.85px;font-size:13.5px;line-height:13.5px;color:#9c9c9c;transform:scaleX(0.8513);-webkit-text-stroke:0.08px #9c9c9c;font-weight:bold;">N</span>
<span class="t" style="left:133.50px;top:118.85px;font-size:13.5px;line-height:13.5px;color:#9c9c9c;transform:scaleX(0.7898);-webkit-text-stroke:0.08px #9c9c9c;font-weight:bold;font-style:italic;">K</span>
<span class="t" style="left:157.00px;top:118.85px;font-size:13.5px;line-height:13.5px;color:#9c9c9c;transform:scaleX(0.7440);-webkit-text-stroke:0.08px #9c9c9c;font-weight:bold;">S</span>
<span class="t" style="left:279.00px;top:117.55px;font-size:16.5px;line-height:16.5px;color:#a3a3a3;transform:scaleX(0.8177);-webkit-text-stroke:0.3px #a3a3a3;">A</span>
<span class="t" style="left:447.00px;top:82.75px;font-size:11.5px;line-height:11.5px;color:#a3a3a3;transform:scaleX(0.8599);-webkit-text-stroke:0.3px #a3a3a3;">ab</span>
<span class="t" style="left:447.50px;top:90.75px;font-size:11.5px;line-height:11.5px;color:#a3a3a3;transform:scaleX(0.8696);-webkit-text-stroke:0.3px #a3a3a3;">c</span>
<span class="t" style="left:395.00px;top:84.25px;font-size:11.5px;line-height:11.5px;color:#a3a3a3;transform:scaleX(0.8599);-webkit-text-stroke:0.3px #a3a3a3;transform-origin:50% 50%;rotate:-50deg;">ab</span>
<span class="t" style="left:507.50px;top:117.25px;font-size:17.5px;line-height:17.5px;color:#8e8e8e;transform:scaleX(0.8219);">$</span>
<span class="t" style="left:542.00px;top:118.00px;font-size:16px;line-height:16px;color:#8e8e8e;transform:scaleX(0.8435);-webkit-text-stroke:0.1px #8e8e8e;">%</span>
<span class="t" style="left:563.00px;top:119.50px;font-size:12px;line-height:12px;color:#8e8e8e;transform:scaleX(0.6992);-webkit-text-stroke:0.3px #8e8e8e;">000</span>
<span class="t" style="left:600.00px;top:116.55px;font-size:10.5px;line-height:10.5px;color:#a3a3a3;transform:scaleX(0.9076);-webkit-text-stroke:0.3px #a3a3a3;">0</span>
<span class="t" style="left:593.00px;top:124.55px;font-size:10.5px;line-height:10.5px;color:#a3a3a3;transform:scaleX(0.8427);-webkit-text-stroke:0.3px #a3a3a3;">,00</span>
<span class="t" style="left:616.00px;top:116.55px;font-size:10.5px;line-height:10.5px;color:#a3a3a3;transform:scaleX(0.8221);-webkit-text-stroke:0.3px #a3a3a3;">,00</span>
<span class="t" style="left:620.50px;top:124.55px;font-size:10.5px;line-height:10.5px;color:#a3a3a3;transform:scaleX(0.8565);-webkit-text-stroke:0.3px #a3a3a3;">,0</span>
<span class="t" style="left:668.00px;top:77.50px;font-size:14px;line-height:14px;color:#a6a6a6;transform:scaleX(0.8154);-webkit-text-stroke:0.3px #a6a6a6;">Formato condicional</span>
<span class="t" style="left:668.00px;top:102.50px;font-size:14px;line-height:14px;color:#a6a6a6;transform:scaleX(0.8121);-webkit-text-stroke:0.3px #a6a6a6;">Dar formato como tabla</span>
<span class="t" style="left:668.00px;top:127.00px;font-size:14px;line-height:14px;color:#a6a6a6;transform:scaleX(0.7598);-webkit-text-stroke:0.3px #a6a6a6;">Estilos de celda</span>
<span class="t" style="left:839.30px;top:77.50px;font-size:14px;line-height:14px;color:#a6a6a6;transform:scaleX(0.7690);-webkit-text-stroke:0.3px #a6a6a6;">Insertar</span>
<span class="t" style="left:839.30px;top:102.50px;font-size:14px;line-height:14px;color:#a6a6a6;transform:scaleX(0.7950);-webkit-text-stroke:0.3px #a6a6a6;">Eliminar</span>
<span class="t" style="left:839.30px;top:127.00px;font-size:14px;line-height:14px;color:#222;transform:scaleX(0.8057);-webkit-text-stroke:0.3px #222;">Formato</span>
<span class="t" style="left:979.30px;top:76.60px;font-size:17px;line-height:17px;color:#a3a3a3;transform:scaleX(0.9171);-webkit-text-stroke:0.4px #a3a3a3;">A</span>
<span class="t" style="left:979.80px;top:92.20px;font-size:17px;line-height:17px;color:#a3a3a3;transform:scaleX(0.9052);-webkit-text-stroke:0.4px #a3a3a3;">Z</span>
<span class="t" style="left:968.80px;top:114.80px;font-size:14px;line-height:14px;color:#a6a6a6;transform:scaleX(0.7904);-webkit-text-stroke:0.3px #a6a6a6;">Ordenar y</span>
<span class="t" style="left:975.00px;top:132.30px;font-size:14px;line-height:14px;color:#a6a6a6;transform:scaleX(0.8678);-webkit-text-stroke:0.3px #a6a6a6;">filtrar</span>
<span class="t" style="left:1034.50px;top:114.80px;font-size:14px;line-height:14px;color:#222;transform:scaleX(0.7675);-webkit-text-stroke:0.3px #222;">Buscar y</span>
<span class="t" style="left:1022.50px;top:132.30px;font-size:14px;line-height:14px;color:#222;transform:scaleX(0.7837);-webkit-text-stroke:0.3px #222;">seleccionar</span>
<span class="t" style="left:1107.50px;top:114.80px;font-size:14px;line-height:14px;color:#a6a6a6;transform:scaleX(0.8157);-webkit-text-stroke:0.3px #a6a6a6;">Complementos</span>
<span class="t" style="left:1211.80px;top:114.80px;font-size:14px;line-height:14px;color:#222;transform:scaleX(0.7484);-webkit-text-stroke:0.3px #222;">Crear</span>
<span class="t" style="left:1207.50px;top:132.30px;font-size:14px;line-height:14px;color:#222;transform:scaleX(0.7374);-webkit-text-stroke:0.3px #222;">un PDF</span>
<span class="t" style="left:208.00px;top:187.00px;font-size:15px;line-height:15px;color:#555;transform:scaleX(0.9857);-webkit-text-stroke:0.3px #555;font-style:italic;font-family:'Liberation Serif',serif;">fx</span>
<svg style="left:0;top:0" width="1280" height="753" viewBox="0 0 1280 753"><g fill="none" stroke="#fff" stroke-width="1.8"><path d="M21 11.4H33V24.6H21Z"/><path d="M23.6 11.5V16.6H30.4V11.5" stroke-width="1.5"/><path d="M24 24.5V20.6H30V24.5" stroke-width="1.6"/><path d="M53 11.8L48.8 16L53 20.4" stroke-width="2.1"/><path d="M49.5 16H56a4.3 4.3 0 0 1 0 8.6H53.5" stroke-width="2.1"/></g><g fill="none" stroke="#1fa365" stroke-width="2.1"><path d="M92 12L96 16L92 20.5"/><path d="M95.5 16H89.5a4.3 4.3 0 0 0 0 8.6H91.5"/></g><path d="M67.40 16.00L70.00 19.00L72.60 16.00" fill="none" stroke="#fff" stroke-width="1.4"/><path d="M104.20 16.00L106.80 19.00L109.40 16.00" fill="none" stroke="#1f9a5f" stroke-width="1.4"/><path d="M124.5 15.8H130" stroke="#fff" stroke-width="1.3"/><path d="M124.3 18.3H130.2L127.25 21.5Z" fill="#fff"/><ellipse cx="1086.2" cy="18.2" rx="11" ry="12.9" fill="#050505"/><path d="M1078.5 17.8H1093.5" stroke="#e8e8e8" stroke-width="1.6" stroke-dasharray="2.2 0.5"/><path d="M1080 20.8H1092" stroke="#19b3a6" stroke-width="1.1" stroke-dasharray="1.6 0.5"/><g fill="none" stroke="#fff" stroke-width="1.2"><path d="M1123 11.5H1135.5V21.5H1123Z"/><path d="M1123 14H1135.5"/><path d="M1129.3 20V15.5M1127 17.5L1129.3 15.3L1131.6 17.5"/><path d="M1168.5 15.5H1178.5"/><path d="M1212 13.5H1220V21.5H1212Z"/><path d="M1214 13.5V11.5H1222V19.5H1220"/><path d="M1254.5 11.5L1264 21.5M1264 11.5L1254.5 21.5" stroke-width="1.3"/></g><g fill="none" stroke="#fff" stroke-width="1.3"><path d="M777.5 56.5V54.5C775.5 52.5 774.8 51.5 774.8 49.8a5 5 0 0 1 10 0C784.8 51.5 784 52.5 782 54.5V56.5Z"/><path d="M777.8 59H781.8M778.5 61H781"/></g><g fill="none" stroke="#fff" stroke-width="1.2"><path d="M1184.5 52H1181.5V59.5H1190.5V56"/><path d="M1184 56.5C1184 52.5 1186 50.5 1189 50.5M1187.3 48L1190 50.5L1187.3 53"/></g><path d="M1259.70 51.50L1262.50 54.50L1265.30 51.50" fill="none" stroke="#fff" stroke-width="1.4"/><rect x="16" y="80.8" width="22.5" height="27" fill="#f9c574"/><rect x="21" y="79.5" width="12" height="5.3" fill="#7a7a7a"/><rect x="24.6" y="77.6" width="4.8" height="3" fill="none" stroke="#7a7a7a" stroke-width="1.2"/><path d="M29.5 90.3H37.5L41.8 94.6V109.2H29.5Z" fill="#fff" stroke="#8c8c8c" stroke-width="1"/><path d="M37.3 90.5V94.8H41.6" fill="none" stroke="#8c8c8c" stroke-width="0.9"/><path d="M24.40 136.50L27.00 139.50L29.60 136.50" fill="none" stroke="#333" stroke-width="1.3"/><g fill="none" stroke-linecap="round"><path d="M53 76.3L60.2 87.5M61.6 76.3L54.4 87.5" stroke="#6f6f6f" stroke-width="1.4"/><circle cx="53.6" cy="89.3" r="2.5" stroke="#3f88cc" stroke-width="1.3"/><circle cx="61" cy="89.3" r="2.5" stroke="#3f88cc" stroke-width="1.3"/></g><g fill="#fff" stroke="#7d7d7d" stroke-width="1"><path d="M50 101.5H55L57.8 104.3V112.5H50Z"/><path d="M55.8 105.2H61L64 108.2V116H55.8Z"/></g><path d="M52 105H54M52 107.5H54M52 110H54M58 110.5H62M58 113H62" stroke="#3f88cc" stroke-width="0.9"/><path d="M75.90 107.50L78.50 110.50L81.10 107.50" fill="none" stroke="#333" stroke-width="1.3"/><g transform="rotate(-38 57.5 133.5)"><rect x="51" y="130" width="7" height="8" fill="#f5b95c"/><rect x="58" y="130.5" width="5.5" height="7" fill="#7a7a7a"/><rect x="63.5" y="132.3" width="3.5" height="3.2" fill="#5f5f5f"/></g><path d="M86.5 161.5V155.5H92.5" fill="none" stroke="#777" stroke-width="1"/><path d="M89.0 158.0L94.0 163.0M90.5 163.3H94.3V159.5" fill="none" stroke="#777" stroke-width="1.1"/><path d="M210.70 91.90H216.30L213.50 95.10Z" fill="#3a3a3a"/><path d="M252.70 91.90H258.30L255.50 95.10Z" fill="#3a3a3a"/><path d="M277.5 87.5H282.5L280 84.6Z" fill="#b5b5b5"/><path d="M299.5 84.8H304.5L302 87.8Z" fill="#b5b5b5"/><path d="M173.30 124.60L176.30 127.80L179.30 124.60" fill="none" stroke="#a3a3a3" stroke-width="1.3"/><path d="M216.80 124.60L219.80 127.80L222.80 124.60" fill="none" stroke="#a3a3a3" stroke-width="1.3"/><path d="M260.00 124.60L263.00 127.80L266.00 124.60" fill="none" stroke="#a3a3a3" stroke-width="1.3"/><path d="M296.60 124.60L299.60 127.80L302.60 124.60" fill="none" stroke="#a3a3a3" stroke-width="1.3"/><path d="M157 132.6H163.8" stroke="#a3a3a3" stroke-width="1.1"/><path d="M188.7 115V137.5M232 115V137.5" stroke="#dcdcdc" stroke-width="1"/><g stroke="#d9a6b4" stroke-width="1" stroke-dasharray="1 1.1" fill="none"><path d="M197.5 118.5H208.5M197.5 125H208.5M197.5 118.5V131.5M203 118.5V131.5M208.5 118.5V131.5"/></g><path d="M197 132.2H209" stroke="#a9a9a9" stroke-width="1.4"/><g fill="none" stroke="#b0b0b0" stroke-width="1.2"><path d="M241.5 125.5L247 119.5L253 125L247 131Z" fill="#f7f7f7"/><path d="M246 121V118.3a1.6 1.6 0 0 1 3.2 0V121"/><path d="M253 124.5C254.3 126 254.6 127.5 254 129" /></g><rect x="239.8" y="131.8" width="14.6" height="2.4" fill="#dedede"/><path d="M304.5 161.5V155.5H310.5" fill="none" stroke="#b9b9b9" stroke-width="1"/><path d="M307.0 158.0L312.0 163.0M308.5 163.3H312.3V159.5" fill="none" stroke="#b9b9b9" stroke-width="1.1"/><path d="M326.20 84.60H339.50" stroke="#a3a3a3" stroke-width="1.2"/><path d="M326.20 88.00H339.50" stroke="#a3a3a3" stroke-width="1.2"/><path d="M326.20 91.30H339.50" stroke="#a3a3a3" stroke-width="1.2"/><path d="M349.00 88.60H361.80" stroke="#a3a3a3" stroke-width="1.2"/><path d="M349.00 92.00H361.80" stroke="#a3a3a3" stroke-width="1.2"/><path d="M349.00 95.40H361.80" stroke="#a3a3a3" stroke-width="1.2"/><path d="M371.40 94.00H384.40" stroke="#a3a3a3" stroke-width="1.2"/><path d="M371.40 97.30H384.40" stroke="#a3a3a3" stroke-width="1.2"/><path d="M371.40 100.60H384.40" stroke="#a3a3a3" stroke-width="1.2"/><path d="M326.20 121.10H339.50" stroke="#a3a3a3" stroke-width="1.2"/><path d="M326.20 124.40H335.78" stroke="#a3a3a3" stroke-width="1.2"/><path d="M326.20 127.70H339.50" stroke="#a3a3a3" stroke-width="1.2"/><path d="M326.20 131.00H335.78" stroke="#a3a3a3" stroke-width="1.2"/><path d="M349.00 121.10H361.80" stroke="#a3a3a3" stroke-width="1.2"/><path d="M350.79 124.40H360.01" stroke="#a3a3a3" stroke-width="1.2"/><path d="M349.00 127.70H361.80" stroke="#a3a3a3" stroke-width="1.2"/><path d="M350.79 131.00H360.01" stroke="#a3a3a3" stroke-width="1.2"/><path d="M371.40 121.10H384.40" stroke="#a3a3a3" stroke-width="1.2"/><path d="M375.04 124.40H384.40" stroke="#a3a3a3" stroke-width="1.2"/><path d="M371.40 127.70H384.40" stroke="#a3a3a3" stroke-width="1.2"/><path d="M375.04 131.00H384.40" stroke="#a3a3a3" stroke-width="1.2"/><path d="M400 100L409 88.5M405.5 88.8L409.2 88.3L409 92" fill="none" stroke="#a3a3a3" stroke-width="1.2"/><path d="M413.00 91.20L416.00 94.40L419.00 91.20" fill="none" stroke="#a3a3a3" stroke-width="1.3"/><path d="M438.4 80.5V138.5" stroke="#dcdcdc" stroke-width="1"/><path d="M457.5 95V97.3H453.8M455.3 95.8L453.6 97.3L455.3 98.9" fill="none" stroke="#a3a3a3" stroke-width="0.9"/><path d="M394.00 119.20H409.00" stroke="#a3a3a3" stroke-width="1.2"/><path d="M394.00 132.20H409.00" stroke="#a3a3a3" stroke-width="1.2"/><path d="M401.50 122.50H409.00" stroke="#a3a3a3" stroke-width="1.2"/><path d="M401.50 125.70H409.00" stroke="#a3a3a3" stroke-width="1.2"/><path d="M401.50 129.00H409.00" stroke="#a3a3a3" stroke-width="1.2"/><path d="M394.5 125.7H400.5M397 123.2L394.5 125.7L397 128.2" fill="none" stroke="#a3a3a3" stroke-width="1.2"/><path d="M416.30 119.20H431.40" stroke="#a3a3a3" stroke-width="1.2"/><path d="M416.30 132.20H431.40" stroke="#a3a3a3" stroke-width="1.2"/><path d="M424.00 122.50H431.40" stroke="#a3a3a3" stroke-width="1.2"/><path d="M424.00 125.70H431.40" stroke="#a3a3a3" stroke-width="1.2"/><path d="M424.00 129.00H431.40" stroke="#a3a3a3" stroke-width="1.2"/><path d="M416.5 125.7H422.5M420 123.2L422.5 125.7L420 128.2" fill="none" stroke="#a3a3a3" stroke-width="1.2"/><g fill="none" stroke="#b0b0b0" stroke-width="1.1"><rect x="445.7" y="117.5" width="13.8" height="15.8"/><path d="M445.7 121.5H459.5M445.7 129.3H459.5M452.6 117.5V121.5M452.6 129.3V133.3"/><path d="M448 125.4H457.2M449.5 124L448 125.4L449.5 126.8M455.7 124L457.2 125.4L455.7 126.8" stroke-width="0.9"/></g><path d="M470.80 124.60L473.80 127.80L476.80 124.60" fill="none" stroke="#b9b9b9" stroke-width="1.3"/><path d="M482.5 161.5V155.5H488.5" fill="none" stroke="#b9b9b9" stroke-width="1"/><path d="M485.0 158.0L490.0 163.0M486.5 163.3H490.3V159.5" fill="none" stroke="#b9b9b9" stroke-width="1.1"/><path d="M622.70 91.90H628.30L625.50 95.10Z" fill="#a9a9a9"/><path d="M524.00 124.60L527.00 127.80L530.00 124.60" fill="none" stroke="#222" stroke-width="1.3"/><path d="M584.5 115V137.5" stroke="#dcdcdc" stroke-width="1"/><path d="M592.3 121.5H598M594.5 119.3L592.3 121.5L594.5 123.7" fill="none" stroke="#a3a3a3" stroke-width="1"/><path d="M614.3 129.5H619.8M617.6 127.3L619.8 129.5L617.6 131.7" fill="none" stroke="#a3a3a3" stroke-width="1"/><path d="M628.5 161.5V155.5H634.5" fill="none" stroke="#b9b9b9" stroke-width="1"/><path d="M631.0 158.0L636.0 163.0M632.5 163.3H636.3V159.5" fill="none" stroke="#b9b9b9" stroke-width="1.1"/><rect x="650" y="75.5" width="12.5" height="13.5" fill="#e4e4e4"/><rect x="650" y="75.5" width="12.5" height="4.50" fill="#bdbdbd"/><g fill="none" stroke="#b3b3b3" stroke-width="1"><rect x="650" y="75.5" width="12.5" height="13.5"/><path d="M650 80.00H662.5M650 84.50H662.5M654.17 75.5V89.0M658.33 75.5V89.0"/></g><rect x="650" y="75.5" width="4.2" height="13.5" fill="#bdbdbd"/><rect x="655.5" y="83" width="9.5" height="9.5" fill="#f3f3f3" stroke="#b0b0b0" stroke-width="1.1"/><path d="M658 86.6H662.8M658 89H662.8M661.6 85.2L659.4 90.6" stroke="#9a9a9a" stroke-width="0.9" fill="none"/><rect x="650" y="100.5" width="14.5" height="13" fill="#e4e4e4"/><rect x="650" y="100.5" width="14.5" height="4.33" fill="#bdbdbd"/><g fill="none" stroke="#b3b3b3" stroke-width="1"><rect x="650" y="100.5" width="14.5" height="13"/><path d="M650 104.83H664.5M650 109.17H664.5M654.83 100.5V113.5M659.67 100.5V113.5"/></g><path d="M654.5 117L657 112.5L664.2 103.5L665.6 104.8L659 114.2Z" fill="#a9a9a9" stroke="#f3f3f3" stroke-width="0.6"/><rect x="650" y="125.2" width="14.5" height="13" fill="#e4e4e4"/><rect x="650" y="125.2" width="14.5" height="4.33" fill="#e4e4e4"/><g fill="none" stroke="#b3b3b3" stroke-width="1"><rect x="650" y="125.2" width="14.5" height="13"/><path d="M650 129.53H664.5M650 133.87H664.5M654.83 125.2V138.2M659.67 125.2V138.2"/></g><path d="M654.5 141.7L657 137.2L664.2 128.2L665.6 129.5L659 138.9Z" fill="#a9a9a9" stroke="#f3f3f3" stroke-width="0.6"/><path d="M774.20 83.10L776.80 85.90L779.40 83.10" fill="none" stroke="#a3a3a3" stroke-width="1.2"/><path d="M790.40 108.10L793.00 110.90L795.60 108.10" fill="none" stroke="#a3a3a3" stroke-width="1.2"/><path d="M746.20 132.60L748.80 135.40L751.40 132.60" fill="none" stroke="#a3a3a3" stroke-width="1.2"/><g fill="none" stroke="#b0b0b0" stroke-width="1"><rect x="821" y="83" width="7.5" height="8.5"/><path d="M821 87.2H828.5M824.7 83V91.5"/><rect x="827.5" y="80.5" width="8.5" height="3.6"/><path d="M826.5 78H822M824 76L822 78L824 80"/><rect x="821" y="108" width="7.5" height="8.5"/><path d="M821 112.2H828.5M824.7 108V116.5"/><rect x="821.5" y="101" width="6" height="4"/><path d="M830 102L835.5 108M835.5 102L830 108" stroke-width="1.2"/></g><g fill="none" stroke="#6a6a6a" stroke-width="1"><rect x="821.5" y="129" width="13.5" height="11.5" rx="1"/><path d="M821.5 132.8H835M821.5 136.6H835M826 129V140.5M830.5 129V140.5"/></g><rect x="826" y="132.8" width="4.5" height="3.8" fill="#2f7fd0"/><path d="M821.5 126.3H835M821.5 124.8V127.8M835 124.8V127.8" stroke="#2f7fd0" stroke-width="1" fill="none"/><path d="M890.70 83.10L893.30 85.90L895.90 83.10" fill="none" stroke="#a3a3a3" stroke-width="1.2"/><path d="M894.40 108.10L897.00 110.90L899.60 108.10" fill="none" stroke="#a3a3a3" stroke-width="1.2"/><path d="M884.90 132.60L887.50 135.40L890.10 132.60" fill="none" stroke="#222" stroke-width="1.3"/><path d="M940.5 79.3V76.8H927.5L934 83.6L927.5 90.4H940.5V88" fill="none" stroke="#2b2b2b" stroke-width="1.9"/><path d="M952.40 83.10L955.00 85.90L957.60 83.10" fill="none" stroke="#222" stroke-width="1.3"/><rect x="927.5" y="100.5" width="13" height="16.5" fill="#fff" stroke="#6f6f6f" stroke-width="1"/><rect x="927.5" y="100.5" width="13" height="3" fill="#6f6f6f"/><path d="M934 106V114M930.7 110.8L934 114.2L937.3 110.8" fill="none" stroke="#1e73c8" stroke-width="1.9"/><path d="M946.20 107.90L948.80 110.70L951.40 107.90" fill="none" stroke="#222" stroke-width="1.3"/><g transform="rotate(-40 934 133)"><rect x="927.5" y="130" width="13" height="6.2" rx="1.5" fill="#f2708a"/><rect x="927.5" y="130" width="3.8" height="6.2" rx="1.2" fill="#f59fb0"/></g><path d="M946.20 132.60L948.80 135.40L951.40 132.60" fill="none" stroke="#222" stroke-width="1.3"/><path d="M990.7 86H1006.2L1000 93V101.8H997V93Z" fill="#b0b0b0"/><path d="M1005.10 138.20L1007.50 140.80L1009.90 138.20" fill="none" stroke="#a3a3a3" stroke-width="1.1"/><circle cx="1057.5" cy="88" r="8.6" fill="#fff" stroke="#2179c4" stroke-width="2.3"/><path d="M1051.3 95.6L1043.8 104.6" stroke="#2179c4" stroke-width="3.1" stroke-linecap="round"/><path d="M1081.40 138.20L1083.80 140.80L1086.20 138.20" fill="none" stroke="#222" stroke-width="1.2"/><circle cx="1145" cy="91.3" r="4.6" fill="#cfcfcf"/><circle cx="1145" cy="91.3" r="3" fill="#bdbdbd"/><g fill="none" stroke="#3f7fe0" stroke-width="1.4"><path d="M1227 105H1218.5a2.5 2.5 0 0 1 -2.5 -2.5V82.5a2.5 2.5 0 0 1 2.5 -2.5H1228L1233.5 85.5V93"/><path d="M1220.5 95C1223 92 1224.6 88.5 1224.4 86.6C1224.2 85.3 1223 85.6 1223.2 87C1223.7 90.5 1227 93.3 1229.8 93.5C1231 93.6 1230.8 92.4 1229.3 92.4C1226.5 92.4 1223 93.6 1220.5 95Z" stroke-width="0.9"/><rect x="1226" y="102.6" width="8.6" height="5.2" rx="2.6" transform="rotate(-45 1230.3 105.2)"/><rect x="1231.2" y="96.6" width="8.6" height="5.2" rx="2.6" transform="rotate(-45 1235.5 99.2)"/></g><path d="M1263.50 163.40L1268.00 158.60L1272.50 163.40" fill="none" stroke="#333" stroke-width="1.3"/><path d="M87.30 191.70H93.70L90.50 195.30Z" fill="#777"/><g fill="#b5b5b5"><rect x="113.3" y="188.5" width="1.6" height="1.6"/><rect x="113.3" y="192.8" width="1.6" height="1.6"/><rect x="113.3" y="197" width="1.6" height="1.6"/></g><path d="M141.5 189.5L151.5 199.5M151.5 189.5L141.5 199.5" stroke="#b3b3b3" stroke-width="1.7" fill="none"/><path d="M174.5 195L178.5 199L186 189.8" stroke="#b3b3b3" stroke-width="1.8" fill="none"/><path d="M1265.00 191.20L1268.00 194.80L1271.00 191.20" fill="none" stroke="#777" stroke-width="1.8"/><path d="M20.5 223.8V232.7H12.3Z" fill="#bdbdbd"/></svg>
</div></body></html>
